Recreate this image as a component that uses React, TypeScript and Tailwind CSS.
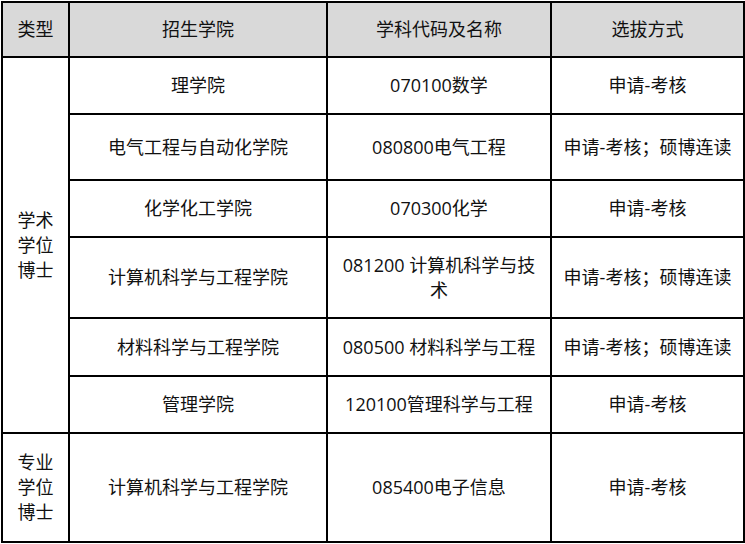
import React from "react";

type Row = {
  college: string;
  code: string;
  method: string;
  h: string;
};

const academic: Row[] = [
  { college: "理学院", code: "070100数学", method: "申请-考核", h: "h-[57px]" },
  { college: "电气工程与自动化学院", code: "080800电气工程", method: "申请-考核；硕博连读", h: "h-[66px]" },
  { college: "化学化工学院", code: "070300化学", method: "申请-考核", h: "h-[57px]" },
  { college: "计算机科学与工程学院", code: "081200 计算机科学与技术", method: "申请-考核；硕博连读", h: "h-[81px]" },
  { college: "材料科学与工程学院", code: "080500 材料科学与工程", method: "申请-考核；硕博连读", h: "h-[58px]" },
  { college: "管理学院", code: "120100管理科学与工程", method: "申请-考核", h: "h-[57px]" },
];

const cell = "border-2 border-black px-[8px] text-center align-middle";

export default function App() {
  return (
    <div className="w-[745px] h-[544px] bg-white pl-[1px] pt-[1px] font-['Open_Sans','Noto_Sans_CJK_SC',sans-serif] text-[18px] leading-[25px] text-[#111]">
      <table className="w-[742px] table-fixed border-collapse">
        <colgroup>
          <col className="w-[67px]" />
          <col className="w-[258px]" />
          <col className="w-[224px]" />
          <col className="w-[193px]" />
        </colgroup>
        <thead>
          <tr className="h-[55px] bg-[#d9d9d9]">
            <th className={`${cell} font-normal`}>类型</th>
            <th className={`${cell} font-normal`}>招生学院</th>
            <th className={`${cell} font-normal`}>学科代码及名称</th>
            <th className={`${cell} font-normal`}>选拔方式</th>
          </tr>
        </thead>
        <tbody>
          {academic.map((r, i) => (
            <tr key={r.college} className={r.h}>
              {i === 0 && (
                <td rowSpan={academic.length} className={cell}>
                  学术学位博士
                </td>
              )}
              <td className={cell}>{r.college}</td>
              <td className={cell}>{r.code}</td>
              <td className={cell}>{r.method}</td>
            </tr>
          ))}
          <tr className="h-[109px]">
            <td className={cell}>专业学位博士</td>
            <td className={cell}>计算机科学与工程学院</td>
            <td className={cell}>085400电子信息</td>
            <td className={cell}>申请-考核</td>
          </tr>
        </tbody>
      </table>
    </div>
  );
}
